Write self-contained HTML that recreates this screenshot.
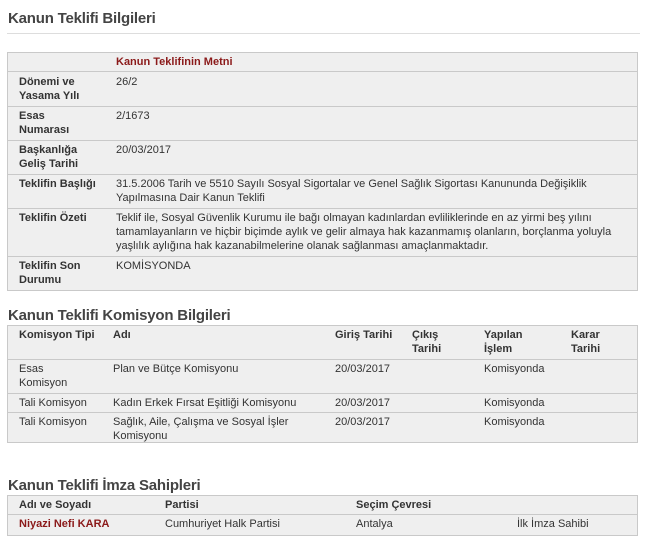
<!DOCTYPE html>
<html><head><meta charset="utf-8"><style>
body{margin:0;width:650px;height:547px;background:#fff;font-family:"Liberation Sans",Arial,sans-serif;font-size:11px;color:#333;position:relative;overflow:hidden}
.a{position:absolute;white-space:nowrap;line-height:14px}
h2{position:absolute;margin:0;font-size:15px;font-weight:bold;color:#444;white-space:nowrap;letter-spacing:-0.2px}
.t{position:absolute;background:#efefef;border:1px solid #c9c9c9;box-sizing:border-box}
.r{position:absolute;left:0;right:0;height:1px;background:#c9c9c9}
b{font-weight:bold;color:#333}
.red{color:#8b1a1a;font-weight:bold}
</style></head><body>
<h2 style="left:8px;top:10px">Kanun Teklifi Bilgileri</h2>
<div style="position:absolute;left:7px;top:33px;width:633px;height:1px;background:#ddd"></div>

<div class="t" style="left:7px;top:52px;width:631px;height:239px">
<div class="r" style="top:18px"></div><div class="r" style="top:53px"></div><div class="r" style="top:87px"></div><div class="r" style="top:121px"></div><div class="r" style="top:155px"></div><div class="r" style="top:203px"></div>
</div>
<div class="a red" style="left:116px;top:55px">Kanun Teklifinin Metni</div>
<div class="a" style="left:19px;top:75px"><b>Dönemi ve<br>Yasama Yılı</b></div><div class="a" style="left:116px;top:75px">26/2</div>
<div class="a" style="left:19px;top:109px"><b>Esas<br>Numarası</b></div><div class="a" style="left:116px;top:109px">2/1673</div>
<div class="a" style="left:19px;top:143px"><b>Başkanlığa<br>Geliş Tarihi</b></div><div class="a" style="left:116px;top:143px">20/03/2017</div>
<div class="a" style="left:19px;top:177px"><b>Teklifin Başlığı</b></div><div class="a" style="left:116px;top:177px">31.5.2006 Tarih ve 5510 Sayılı Sosyal Sigortalar ve Genel Sağlık Sigortası Kanununda Değişiklik<br>Yapılmasına Dair Kanun Teklifi</div>
<div class="a" style="left:19px;top:211px"><b>Teklifin Özeti</b></div><div class="a" style="left:116px;top:211px">Teklif ile, Sosyal Güvenlik Kurumu ile bağı olmayan kadınlardan evliliklerinde en az yirmi beş yılını<br>tamamlayanların ve hiçbir biçimde aylık ve gelir almaya hak kazanmamış olanların, borçlanma yoluyla<br>yaşlılık aylığına hak kazanabilmelerine olanak sağlanması amaçlanmaktadır.</div>
<div class="a" style="left:19px;top:259px"><b>Teklifin Son<br>Durumu</b></div><div class="a" style="left:116px;top:259px">KOMİSYONDA</div>

<h2 style="left:8px;top:307px">Kanun Teklifi Komisyon Bilgileri</h2>
<div class="t" style="left:7px;top:325px;width:631px;height:118px">
<div class="r" style="top:33px"></div><div class="r" style="top:67px"></div><div class="r" style="top:86px"></div>
</div>
<div class="a" style="left:19px;top:328px"><b>Komisyon Tipi</b></div><div class="a" style="left:113px;top:328px"><b>Adı</b></div><div class="a" style="left:335px;top:328px"><b>Giriş Tarihi</b></div><div class="a" style="left:412px;top:328px"><b>Çıkış<br>Tarihi</b></div><div class="a" style="left:484px;top:328px"><b>Yapılan<br>İşlem</b></div><div class="a" style="left:571px;top:328px"><b>Karar<br>Tarihi</b></div>
<div class="a" style="left:19px;top:362px">Esas<br>Komisyon</div><div class="a" style="left:113px;top:362px">Plan ve Bütçe Komisyonu</div><div class="a" style="left:335px;top:362px">20/03/2017</div><div class="a" style="left:484px;top:362px">Komisyonda</div>
<div class="a" style="left:19px;top:396px">Tali Komisyon</div><div class="a" style="left:113px;top:396px">Kadın Erkek Fırsat Eşitliği Komisyonu</div><div class="a" style="left:335px;top:396px">20/03/2017</div><div class="a" style="left:484px;top:396px">Komisyonda</div>
<div class="a" style="left:19px;top:415px">Tali Komisyon</div><div class="a" style="left:113px;top:415px">Sağlık, Aile, Çalışma ve Sosyal İşler<br>Komisyonu</div><div class="a" style="left:335px;top:415px">20/03/2017</div><div class="a" style="left:484px;top:415px">Komisyonda</div>

<h2 style="left:8px;top:477px">Kanun Teklifi İmza Sahipleri</h2>
<div class="t" style="left:7px;top:495px;width:631px;height:41px"><div class="r" style="top:18px"></div></div>
<div class="a" style="left:19px;top:498px"><b>Adı ve Soyadı</b></div><div class="a" style="left:165px;top:498px"><b>Partisi</b></div><div class="a" style="left:356px;top:498px"><b>Seçim Çevresi</b></div>
<div class="a red" style="left:19px;top:517px">Niyazi Nefi KARA</div><div class="a" style="left:165px;top:517px">Cumhuriyet Halk Partisi</div><div class="a" style="left:356px;top:517px">Antalya</div><div class="a" style="left:517px;top:517px">İlk İmza Sahibi</div>
</body></html>
